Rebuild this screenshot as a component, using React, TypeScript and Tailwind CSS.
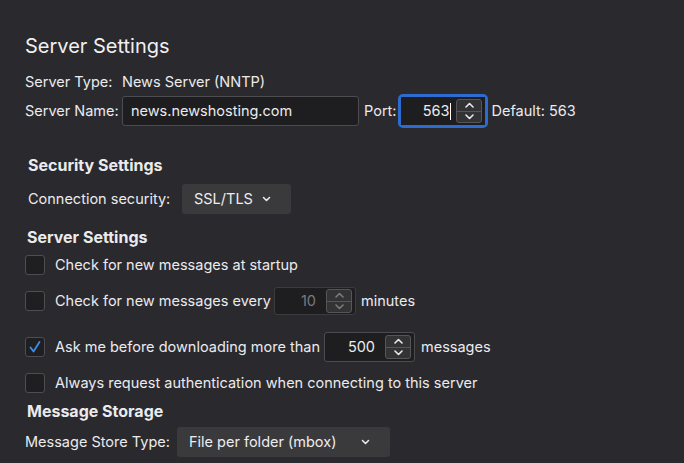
import React from 'react';

const font = { fontFamily: 'Inter, "Noto Sans", sans-serif' };

function Chevron({ up, dim }: { up?: boolean; dim?: boolean }) {
  return (
    <svg width="9" height="6" viewBox="0 0 9 6" className={dim ? 'opacity-40' : ''}>
      <path
        d={up ? 'M1 5 L4.5 1.5 L8 5' : 'M1 1 L4.5 4.5 L8 1'}
        fill="none"
        stroke="#e8e8ea"
        strokeWidth="1.6"
        strokeLinecap="round"
        strokeLinejoin="round"
      />
    </svg>
  );
}

function Spinner({ dim }: { dim?: boolean }) {
  return (
    <div className="flex flex-col w-[26px] h-[24px] border border-[#56565a] rounded-[3px] bg-[#333336]">
      <div className="flex-1 flex items-center justify-center border-b border-[#56565a]">
        <Chevron up dim={dim} />
      </div>
      <div className="flex-1 flex items-center justify-center">
        <Chevron dim={dim} />
      </div>
    </div>
  );
}

function NumberField({ value, width, dim }: { value: string; width: string; dim?: boolean }) {
  return (
    <div
      className={`flex items-center h-full ${width} border rounded-[3px] bg-[#1e1e21] pl-2 pr-[3px] ${
        dim ? 'border-[#3c3c40]' : 'border-[#4c4c50]'
      }`}
    >
      <span className={`flex-1 text-right pr-[10px] ${dim ? 'text-[#7a7a7e]' : 'text-[#ececee]'}`}>{value}</span>
      <Spinner dim={dim} />
    </div>
  );
}

function Checkbox({ checked }: { checked?: boolean }) {
  return (
    <div className="w-[20px] h-[20px] rounded-[3px] border border-[#4e4e52] bg-[#1f1f22] flex items-center justify-center shrink-0">
      {checked && (
        <svg width="14" height="14" viewBox="0 0 14 14">
          <path d="M2.5 7.5 L5.5 11.5 L11.5 2" fill="none" stroke="#3a8fe4" strokeWidth="1.8" strokeLinecap="round" strokeLinejoin="round" />
        </svg>
      )}
    </div>
  );
}

function Select({ label, width }: { label: string; width: string }) {
  return (
    <div className={`flex items-center justify-between h-full ${width} rounded-[3px] bg-[#3a3a3d] pl-[12px] pr-[20px]`}>
      <span className="text-[#ededef]">{label}</span>
      <svg width="9" height="6" viewBox="0 0 9 6">
        <path d="M1.5 1.5 L4.5 4.5 L7.5 1.5" fill="none" stroke="#e8e8ea" strokeWidth="1.6" strokeLinecap="round" strokeLinejoin="round" />
      </svg>
    </div>
  );
}

export default function App() {
  return (
    <div className="w-[684px] h-[463px] overflow-hidden bg-[#2a292e] text-[#ebebed] text-[14.5px]" style={font}>
      <div className="flex flex-col pl-[25px]">
        <div className="mt-[34px] h-[24px] flex items-center text-[20px] text-[#f0f0f2]">Server Settings</div>

        <div className="mt-[14px] h-[20px] flex items-center">
          <span className="w-[97px]">Server Type:</span>
          <span>News Server (NNTP)</span>
        </div>

        <div className="mt-[4px] h-[30px] flex items-center">
          <span className="w-[97px]">Server Name:</span>
          <div className="h-full w-[237px] border border-[#4c4c50] rounded-[3px] bg-[#1e1e21] flex items-center pl-[8px]">
            news.newshosting.com
          </div>
          <span className="ml-[5px]">Port:</span>
          <div className="ml-[2px] h-[34px] rounded-[5px] border-[3px] border-[#2c6bd0] flex">
            <div className="flex items-center w-[84px] h-full bg-[#1e1e21] pr-[2px]">
              <span className="flex-1 text-right pr-[5px] flex items-center justify-end">
                563<span className="inline-block w-px h-[17px] bg-white ml-px" />
              </span>
              <div className="mr-[1px]">
                <Spinner />
              </div>
            </div>
          </div>
          <span className="ml-[3px]">Default: 563</span>
        </div>

        <div className="mt-[29px] h-[20px] flex items-center pl-[3px] font-bold text-[16px]">Security Settings</div>

        <div className="mt-[9px] h-[30px] flex items-center pl-[3px]">
          <span className="w-[154px]">Connection security:</span>
          <Select label="SSL/TLS" width="w-[109px]" />
        </div>

        <div className="mt-[13px] h-[20px] flex items-center pl-[2px] font-bold text-[16px]">Server Settings</div>

        <div className="mt-[8px] h-[20px] flex items-center">
          <Checkbox />
          <span className="ml-[10px]">Check for new messages at startup</span>
        </div>

        <div className="mt-[12px] h-[28px] flex items-center">
          <Checkbox />
          <span className="ml-[10px] w-[219px]">Check for new messages every</span>
          <NumberField value="10" width="w-[82px]" dim />
          <span className="ml-[5px]">minutes</span>
        </div>

        <div className="mt-[17px] h-[30px] flex items-center">
          <Checkbox checked />
          <span className="ml-[10px] w-[269px]">Ask me before downloading more than</span>
          <NumberField value="500" width="w-[91px]" />
          <span className="ml-[6px]">messages</span>
        </div>

        <div className="mt-[11px] h-[20px] flex items-center">
          <Checkbox />
          <span className="ml-[10px]">Always request authentication when connecting to this server</span>
        </div>

        <div className="mt-[8px] h-[20px] flex items-center pl-[2px] font-bold text-[16px]">Message Storage</div>

        <div className="mt-[6px] h-[30px] flex items-center">
          <span className="w-[152px]">Message Store Type:</span>
          <Select label="File per folder (mbox)" width="w-[213px]" />
        </div>
      </div>
    </div>
  );
}
